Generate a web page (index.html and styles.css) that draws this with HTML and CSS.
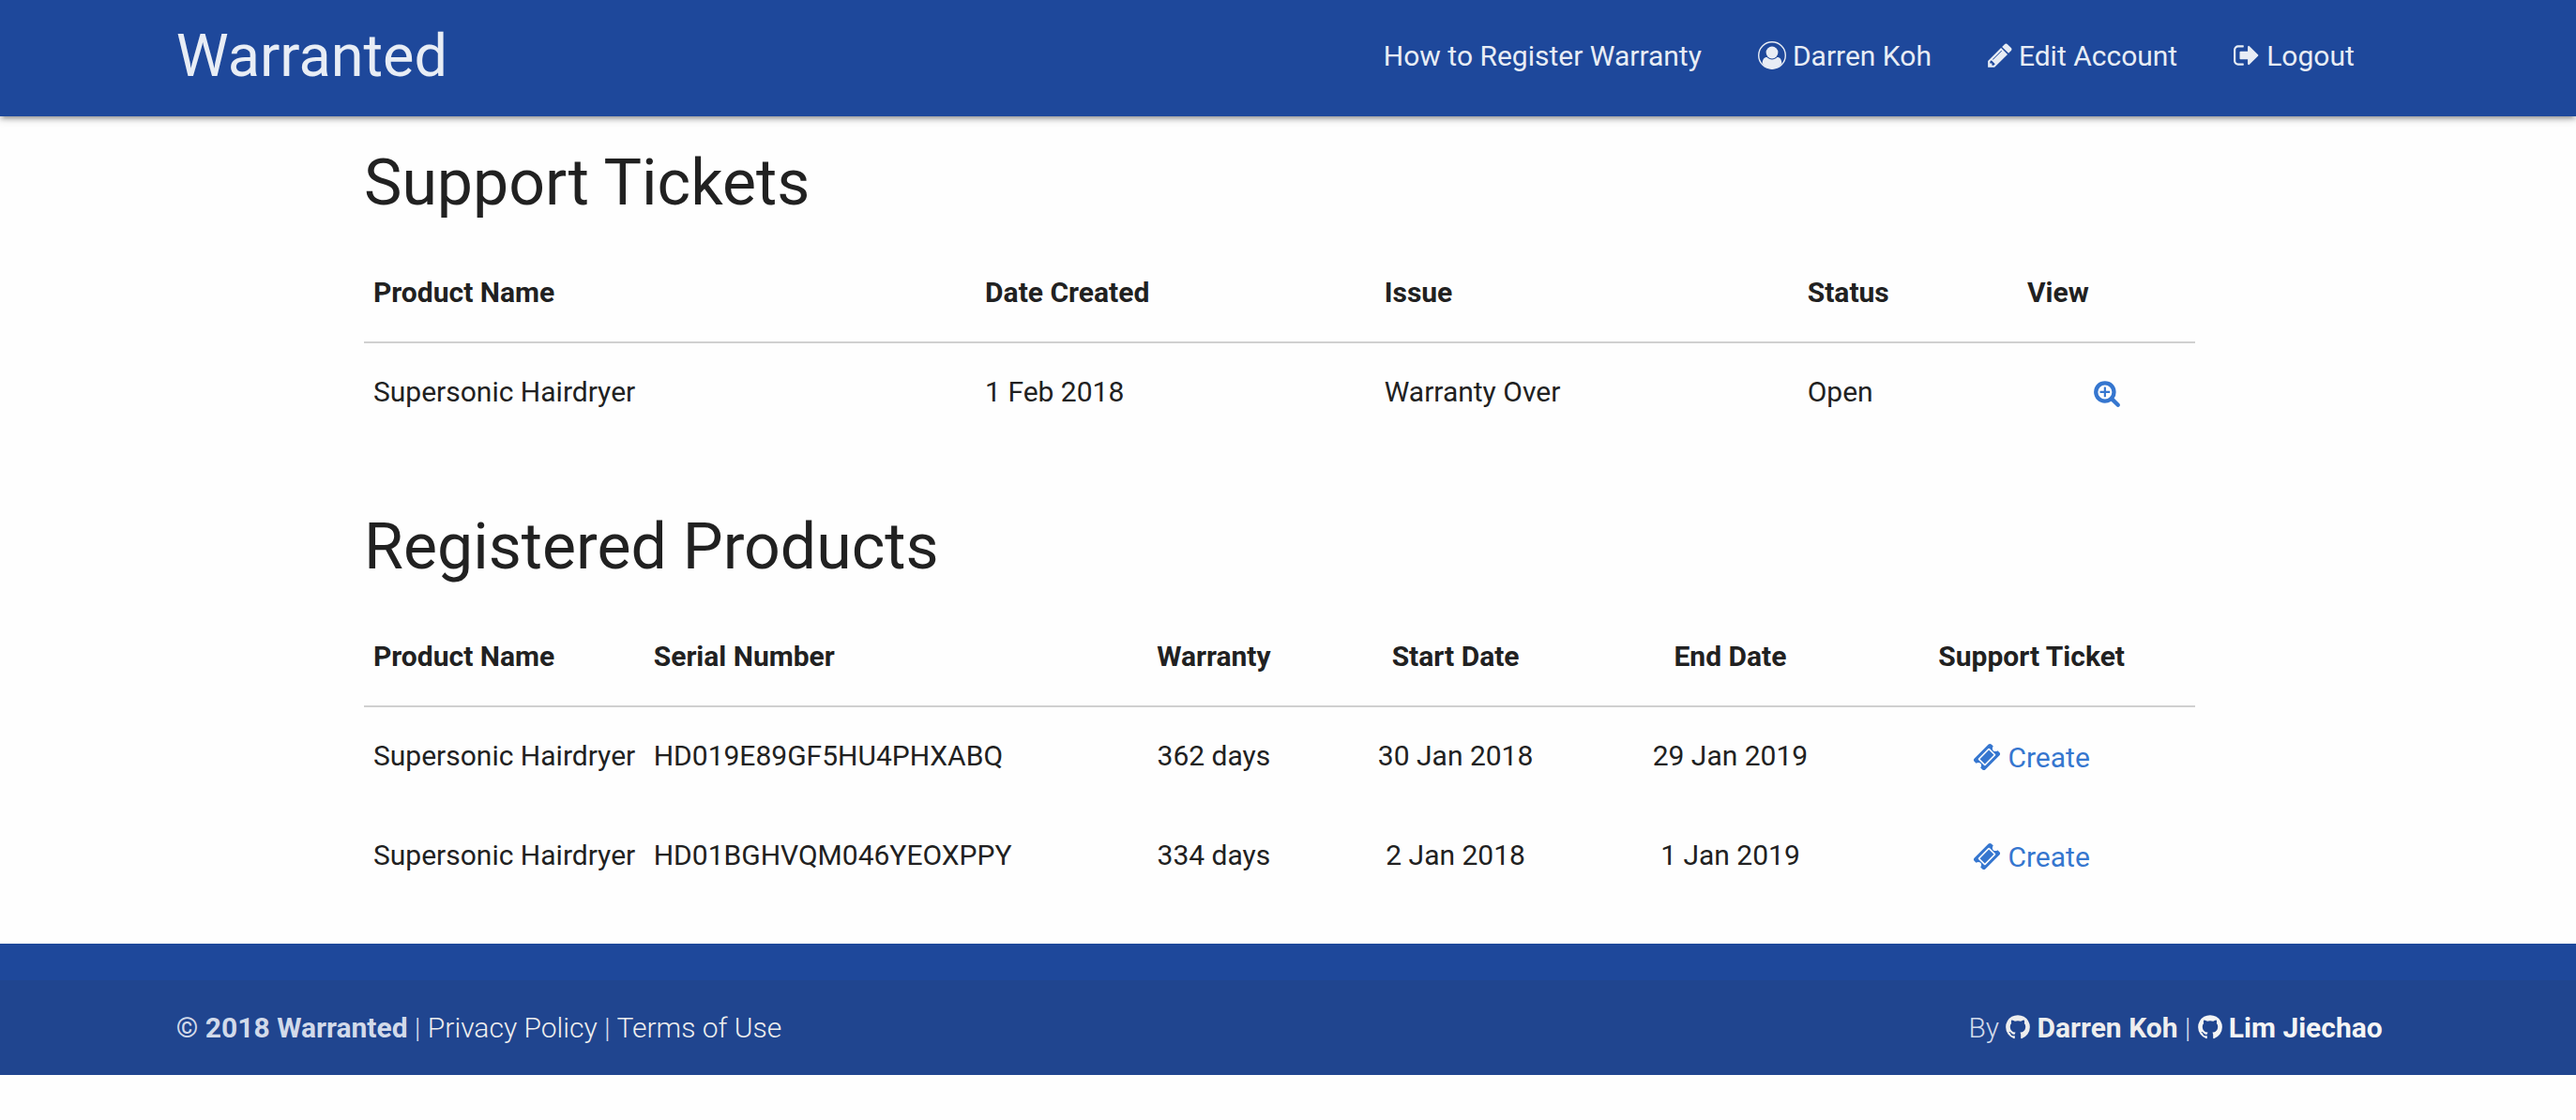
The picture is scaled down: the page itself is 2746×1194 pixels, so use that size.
FILE: index.html
```html
<!DOCTYPE html>
<html lang="en">
<head>
  <meta charset="utf-8">
  <title>Warranted</title>
  <meta name="viewport" content="width=device-width, initial-scale=1">
  <link rel="stylesheet" href="styles.css">
</head>
<body>
  <svg class="sprite" aria-hidden="true">
    <symbol id="user" viewBox="0 0 30 30">
      <circle cx="15" cy="15" r="14.300" fill="none" stroke="currentColor" stroke-width="1.400"/>
      <circle cx="15" cy="12" r="6.400"/>
      <path d="M4.600 23.500c.3-3.900 1.700-6.600 4.900-6.600 3 3.300 8 3.300 11 0 3.200 0 4.600 2.700 4.900 6.600C23.300 27.200 19.300 29.400 15 29.400S6.700 27.200 4.600 23.500z"/>
    </symbol>
    <symbol id="pencil" viewBox="128 0 1536 1792"><path d="M491 1536l91-91-235-235-91 91v107h128v128h107zm523-928q0-22-22-22-10 0-17 7l-542 542q-7 7-7 17 0 22 22 22 10 0 17-7l542-542q7-7 7-17zm-54-192l416 416-832 832h-416v-416zm683 96q0 53-37 90l-166 166-416-416 166-165q36-38 90-38 53 0 91 38l235 234q37 39 37 91z"/></symbol>
    <symbol id="sign-out" viewBox="64 0 1664 1792"><path d="M704 1440q0 4 1 20t.5 26.500-3 23.500-10 19.500-20.500 6.500h-320q-119 0-203.500-84.500t-84.500-203.500v-704q0-119 84.500-203.500t203.500-84.500h320q13 0 22.500 9.500t9.500 22.500q0 4 1 20t.5 26.500-3 23.500-10 19.500-20.500 6.500h-320q-66 0-113 47t-47 113v704q0 66 47 113t113 47h312l11.500 1 11.500 3 8 5.500 7 9 2 13.500zm928-544q0 26-19 45l-544 544q-19 19-45 19t-45-19-19-45v-288h-448q-26 0-45-19t-19-45v-384q0-26 19-45t45-19h448v-288q0-26 19-45t45-19 45 19l544 544q19 19 19 45z"/></symbol>
    <symbol id="ticket" viewBox="0 0 1792 1792"><path d="M1024 452l316 316-572 572-316-316zm-211 979l618-618q19-19 19-45t-19-45l-362-362q-18-18-45-18t-45 18l-618 618q-19 19-19 45t19 45l362 362q18 18 45 18t45-18zm889-637l-907 908q-37 37-90.500 37t-90.500-37l-126-126q56-56 56-136t-56-136-136-56-136 56l-125-126q-37-37-37-90.500t37-90.500l907-906q37-37 90.500-37t90.500 37l125 125q-56 56-56 136t56 136 136 56 136-56l126 125q37 37 37 90.500t-37 90.500z"/></symbol>
    <symbol id="search-plus" viewBox="0 0 1792 1792"><path d="M1088 800v64q0 13-9.500 22.500t-22.500 9.500h-224v224q0 13-9.500 22.500t-22.500 9.500h-64q-13 0-22.500-9.500t-9.500-22.500v-224h-224q-13 0-22.500-9.500t-9.500-22.500v-64q0-13 9.500-22.500t22.500-9.500h224v-224q0-13 9.500-22.500t22.500-9.500h64q13 0 22.500 9.500t9.500 22.500v224h224q13 0 22.500 9.500t9.500 22.500zm128 32q0-185-131.500-316.500t-316.500-131.500-316.500 131.500-131.500 316.500 131.500 316.500 316.500 131.500 316.500-131.500 131.500-316.500zm512 832q0 53-37.500 90.500t-90.500 37.500q-54 0-90-38l-343-342q-179 124-399 124-143 0-273.500-55.500t-225-150-150-225-55.500-273.500 55.500-273.500 150-225 225-150 273.500-55.500 273.500 55.500 225 150 150 225 55.500 273.500q0 220-124 399l343 343q37 37 37 90z"/></symbol>
    <symbol id="github" viewBox="128 0 1536 1792"><path d="M896 128q209 0 385.500 103t279.500 279.500 103 385.500q0 251-146.500 451.500t-378.500 277.500q-27 5-40-7t-13-30q0-3 .5-76.500t.5-134.500q0-97-52-142 57-6 102.500-18t94-39 81-66.500 53-105 20.500-150.500q0-119-79-206 37-91-8-204-28-9-81 11t-92 44l-38 24q-93-26-192-26t-192 26q-16-11-42.500-27t-83.500-38.500-85-13.500q-45 113-8 204-79 87-79 206 0 85 20.500 150t52.500 105 80.500 67 94 39 102.500 18q-39 36-49 103-21 10-45 15t-57 5-65.500-21.500-55.500-62.500q-19-32-48.500-52t-49.500-24l-20-3q-21 0-29 4.500t-5 11.500 9 14 13 12l7 5q22 10 43.500 38t31.500 51l10 23q13 38 44 61.500t67 30 69.500 7 55.500-3.500l23-4q0 38 .5 88.500t.5 54.500q0 18-13 30t-40 7q-232-77-378.500-277.500t-146.500-451.500q0-209 103-385.500t279.500-279.500 385.500-103z"/></symbol>
  </svg>

  <header class="navbar">
    <div class="container navbar-row">
      <a class="brand" href="#">Warranted</a>
      <nav class="nav-links" aria-label="Main">
        <a href="#">How to Register Warranty</a>
        <a href="#"><svg class="icon" aria-hidden="true"><use href="#user"/></svg>Darren Koh</a>
        <a href="#"><svg class="icon icon-narrow" aria-hidden="true"><use href="#pencil"/></svg>Edit Account</a>
        <a href="#"><svg class="icon icon-medium" aria-hidden="true"><use href="#sign-out"/></svg>Logout</a>
      </nav>
    </div>
  </header>

  <main class="content">
    <section class="panel">
      <h1 class="title">Support Tickets</h1>
      <table class="table tickets">
        <thead>
          <tr><th scope="col">Product Name</th><th scope="col">Date Created</th><th scope="col">Issue</th><th scope="col">Status</th><th scope="col">View</th></tr>
        </thead>
        <tbody>
          <tr>
            <td>Supersonic Hairdryer</td><td>1 Feb 2018</td><td>Warranty Over</td><td>Open</td>
            <td class="center"><a class="action action-icon" href="#" aria-label="View ticket"><svg class="icon" aria-hidden="true"><use href="#search-plus"/></svg></a></td>
          </tr>
        </tbody>
      </table>
    </section>

    <section class="panel">
      <h2 class="title">Registered Products</h2>
      <table class="table products">
        <thead>
          <tr><th scope="col">Product Name</th><th scope="col">Serial Number</th><th scope="col" class="center">Warranty</th><th scope="col" class="center">Start Date</th><th scope="col" class="center">End Date</th><th scope="col" class="center">Support Ticket</th></tr>
        </thead>
        <tbody>
          <tr>
            <td>Supersonic Hairdryer</td><td>HD019E89GF5HU4PHXABQ</td><td class="center">362 days</td><td class="center">30 Jan 2018</td><td class="center">29 Jan 2019</td>
            <td class="center"><a class="action" href="#"><svg class="icon" aria-hidden="true"><use href="#ticket"/></svg>Create</a></td>
          </tr>
          <tr>
            <td>Supersonic Hairdryer</td><td>HD01BGHVQM046YEOXPPY</td><td class="center">334 days</td><td class="center">2 Jan 2018</td><td class="center">1 Jan 2019</td>
            <td class="center"><a class="action" href="#"><svg class="icon" aria-hidden="true"><use href="#ticket"/></svg>Create</a></td>
          </tr>
        </tbody>
      </table>
    </section>
  </main>

  <footer class="footer">
    <div class="copyright">
      <div class="container footer-row">
        <div><strong>© 2018 Warranted</strong> | <a href="#">Privacy Policy</a> | <a href="#">Terms of Use</a></div>
        <div>By <a class="author" href="#"><svg class="icon icon-narrow" aria-hidden="true"><use href="#github"/></svg>Darren Koh</a> | <a class="author author-light" href="#"><svg class="icon icon-narrow" aria-hidden="true"><use href="#github"/></svg>Lim Jiechao</a></div>
      </div>
    </div>
  </footer>
</body>
</html>
```

FILE: styles.css
```css
* { box-sizing: border-box; }

body {
  margin: 0;
  background: #fefefe;
  color: #212121;
  font: 400 30px/46px Roboto, sans-serif;
}

a { color: inherit; text-decoration: none; }

.sprite { position: absolute; width: 0; height: 0; }

.icon {
  display: inline-block;
  width: 30px;
  height: 30px;
  margin-right: 7px;
  fill: currentColor;
  vertical-align: -4px;
}
.icon-medium { width: 28px; }
.icon-narrow { width: 26px; }

.container {
  width: 85.65%;
  margin-left: 6.84%;
}

.navbar {
  position: relative;
  background: #1e489b;
  color: #e8edf5;
  box-shadow: 0 4px 4px 0 rgba(0, 0, 0, .14), 0 6px 2px -4px rgba(0, 0, 0, .12), 0 2px 10px 0 rgba(0, 0, 0, .2);
}

.navbar-row {
  display: flex;
  justify-content: space-between;
  align-items: center;
  min-height: 124px;
  padding-bottom: 5px;
}

.brand { font-size: 63px; line-height: 84px; }

.nav-links { display: flex; }
.nav-links a { padding: 0 30px; white-space: nowrap; }

.content {
  width: 71.1%;
  margin-left: 14.13%;
  padding: 26px 0 40px;
}

.panel + .panel { margin-top: 66px; }

.title {
  margin: 0 0 18px;
  font-size: 68px;
  font-weight: 400;
  line-height: 90px;
}

.table {
  width: 100%;
  border-collapse: separate;
  border-spacing: 0;
  table-layout: fixed;
}

.table th, .table td {
  text-align: left;
  white-space: nowrap;
}
.table th {
  padding: 31px 10px 29px;
  border-bottom: 2px solid #d0d0d0;
  font-weight: 700;
}
.table td { padding: 29px 10px 31px; }
.table .center { text-align: center; }

.tickets th:nth-child(1) { width: 33.4%; }
.tickets th:nth-child(2) { width: 21.8%; }
.tickets th:nth-child(3) { width: 23.1%; }
.tickets th:nth-child(4) { width: 12%; }

.products th:nth-child(1) { width: 15.3%; }
.products th:nth-child(2) { width: 25.4%; }
.products th:nth-child(3) { width: 11.4%; }
.products th:nth-child(4) { width: 15%; }
.products th:nth-child(5) { width: 15%; }

.action {
  color: #3576cf;
  line-height: 30px;
  vertical-align: -2px;
}
.action-icon .icon { margin: 0; }

.footer {
  padding-top: 39px;
  background: #1e489b;
}

.copyright {
  padding: 28px 0 27px;
  background: #20458f;
  color: #d2daea;
  font-weight: 300;
}

.footer-row {
  display: flex;
  justify-content: space-between;
}
.footer-row strong { font-weight: 700; }
.footer-row a { color: #eee; }
.footer-row .author { font-weight: 700; }
.footer-row .author-light { color: #f5f5f5; }
```
